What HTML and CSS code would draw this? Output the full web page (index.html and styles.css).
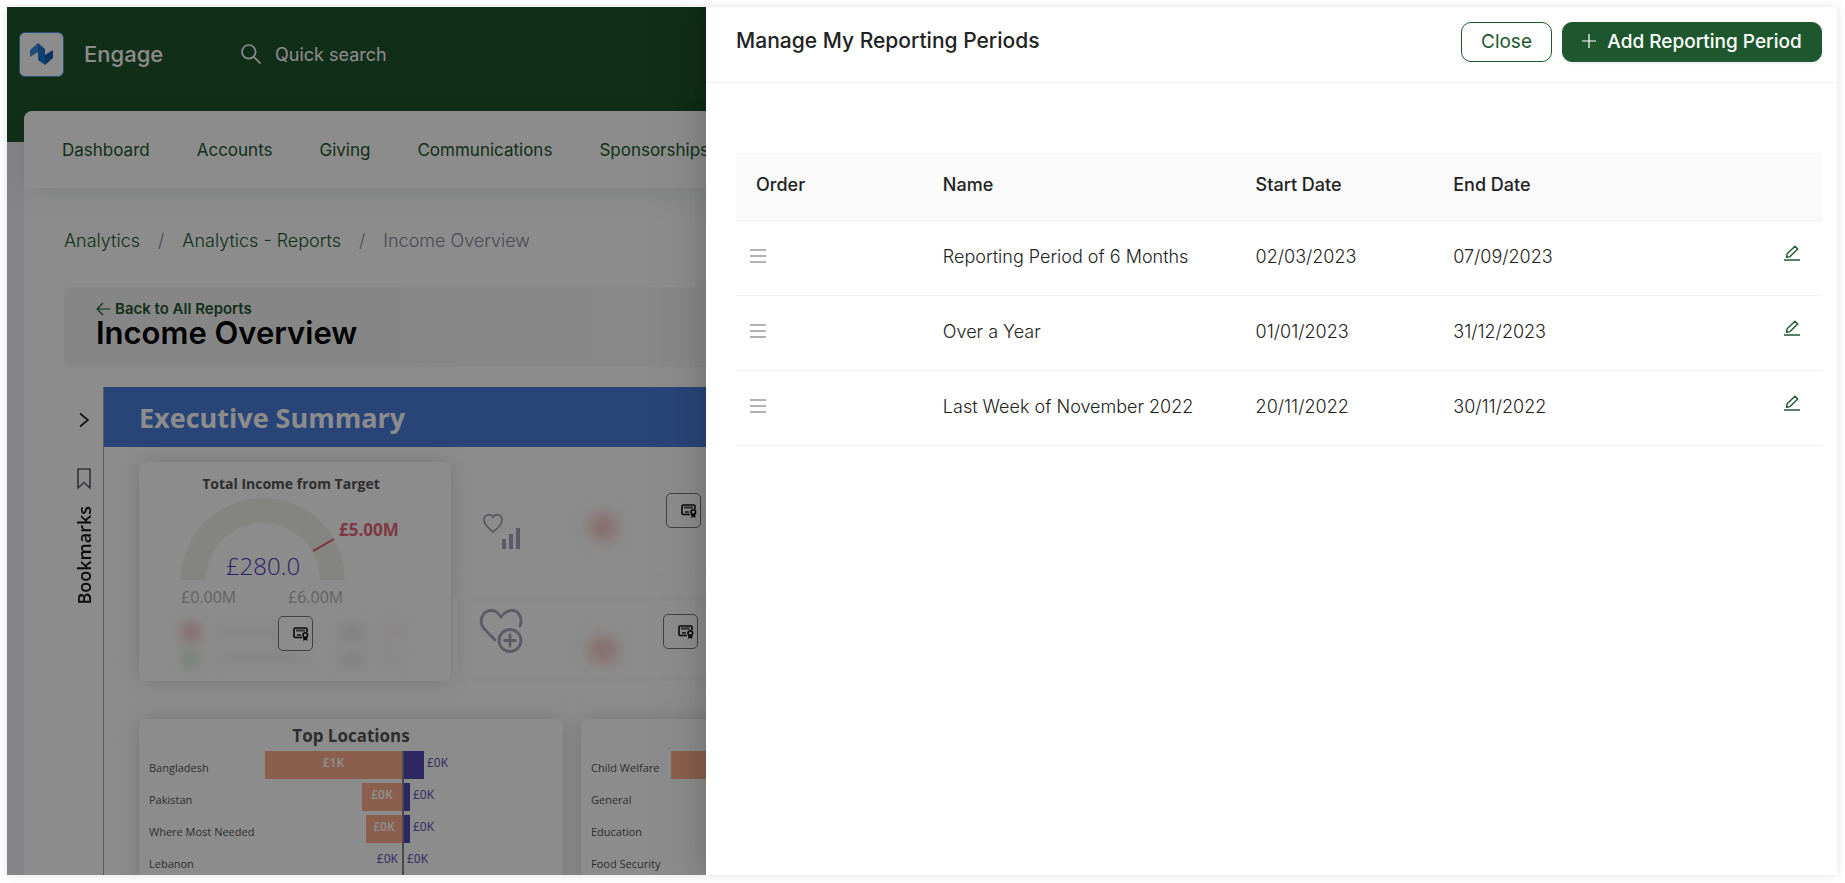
FILE: index.html
```html
<!DOCTYPE html>
<html lang="en">
<head>
<meta charset="utf-8">
<title>Engage - Income Overview</title>
<link rel="stylesheet" href="styles.css">
</head>
<body>
<svg class="defs" aria-hidden="true">
  <symbol id="cert" viewBox="0 0 16 16">
    <path d="M9 11.500H2.200Q1 11.500 1 10.300V3.200Q1 2 2.200 2H12.800Q14 2 14 3.200V6" fill="none" stroke="#111" stroke-width="1.600"/>
    <path d="M3 4.500H12M4 9H8" stroke="#555" stroke-width="1.800"/>
    <circle cx="12.300" cy="9" r="2.300" fill="#fff" stroke="#111" stroke-width="1.600"/>
    <path d="M10.300 11V15L12.300 13.700L14.300 15V11Z" fill="#111"/>
  </symbol>
  <symbol id="menu" viewBox="0 0 16 16">
    <path d="M0 2H16M0 8H16M0 14H16" stroke="#999" stroke-width="1.400"/>
  </symbol>
  <symbol id="edit" viewBox="0 0 16 16">
    <path d="M2.500 12.300L3.100 8.800L11 1.300L13.700 4L6 11.600Z" fill="none" stroke="#1e572e" stroke-width="1.400" stroke-linejoin="round"/>
    <path d="M0 15H16" stroke="#1e572e" stroke-width="1.500"/>
  </symbol>
</svg>
<div class="window">
  <div class="app">
    <header class="topbar">
      <div class="logo">
        <svg viewBox="0 0 24 24" width="24" height="24">
          <path d="M0 8L8 1V10L0 15Z" fill="#3b8fdc"/>
          <path d="M8 1L15 7V23L8 18Z" fill="#1c77cf"/>
          <path d="M15 13L23 8V16L15 23Z" fill="#1560b0"/>
        </svg>
      </div>
      <span class="brand">Engage</span>
      <label class="search">
        <svg viewBox="0 0 20 20" width="20" height="20" fill="none" stroke="#fff" stroke-width="1.700"><circle cx="7.800" cy="7.800" r="6.800"/><path d="M12.800 12.800L19.500 19.500"/></svg>
        <input type="text" placeholder="Quick search" aria-label="Quick search">
      </label>
    </header>
    <div class="page">
      <nav class="nav">
        <a href="#">Dashboard</a><a href="#">Accounts</a><a href="#">Giving</a><a href="#">Communications</a><a href="#">Sponsorships</a>
      </nav>
      <div class="crumbs">
        <a href="#">Analytics</a><span class="sep">/</span><a href="#">Analytics - Reports</a><span class="sep">/</span><span class="current">Income Overview</span>
      </div>
      <div class="heading">
        <a class="back" href="#"><svg viewBox="0 0 14 14" width="14" height="14" fill="none" stroke="#1e572e" stroke-width="1.200"><path d="M14 7H1M7 1L1 7L7 13"/></svg>Back to All Reports</a>
        <h1>Income Overview</h1>
      </div>
      <div class="report">
        <aside class="rail">
          <button class="expand" aria-label="Expand"><svg viewBox="0 0 10 16" width="10" height="16" fill="none" stroke="#222" stroke-width="1.700"><path d="M1 1.500L9 8L1 14.500"/></svg></button>
          <svg class="bookmark" viewBox="0 0 14 22" width="14" height="22" fill="none" stroke="#605e70" stroke-width="1.600"><path d="M1 1H13V20L7 14.500L1 20Z"/></svg>
          <span class="rail-text">Bookmarks</span>
        </aside>
        <div class="canvas">
          <h2 class="banner">Executive Summary</h2>
          <div class="row-top">
            <section class="card gauge">
              <h3>Total Income from Target</h3>
              <svg class="dial" viewBox="0 0 312 115" width="312" height="115">
                <path d="M42 80A82 82 0 0 1 206 80H181A57 57 0 0 0 67 80Z" fill="#f1f0ec"/>
                <path d="M174 51L195 39" stroke="#e8566a" stroke-width="2"/>
                <text x="124" y="75" class="t-value">£280.0</text>
                <text x="200" y="36" class="t-target">£5.00M</text>
                <text x="42" y="103" class="t-scale">£0.00M</text>
                <text x="149" y="103" class="t-scale">£6.00M</text>
              </svg>
              <div class="legend">
                <svg class="haze" viewBox="0 0 312 80" width="312" height="80">
                  <defs><filter id="soft" x="-50%" y="-80%" width="200%" height="260%"><feGaussianBlur stdDeviation="7"/></filter></defs>
                  <g filter="url(#soft)">
                    <circle cx="52" cy="25" r="9" fill="#f3b0b0"/><circle cx="52" cy="52" r="9" fill="#cfe4cf"/>
                    <rect x="77" y="21" width="96" height="8" fill="#eaeaea"/><rect x="77" y="48" width="90" height="8" fill="#eaeaea"/>
                    <rect x="200" y="18" width="26" height="14" fill="#e6e6e6"/><rect x="200" y="45" width="26" height="14" fill="#e6e6e6"/>
                    <circle cx="255" cy="24" r="9" fill="#f8ecec"/><circle cx="255" cy="52" r="9" fill="#eff4ef"/>
                  </g>
                </svg>
                <button class="badge" aria-label="Licence"><svg width="16" height="16"><use href="#cert"/></svg></button>
              </div>
            </section>
            <section class="kpis">
              <div class="kpi">
                <svg class="kpi-icon" viewBox="0 0 44 44" width="44" height="44">
                  <path d="M14 23C9 19 5 15 5 11C5 5 12 4.500 14 8C16 4.500 23 5 23 11C23 15 18 20 14 23Z" fill="none" stroke="#a9a5bd" stroke-width="1.800"/>
                  <path d="M25 40V30M32 40V25M39 40V19" stroke="#a9a5bd" stroke-width="4"/>
                </svg>
                <span class="blob"></span>
                <button class="badge" aria-label="Licence"><svg width="16" height="16"><use href="#cert"/></svg></button>
              </div>
              <div class="kpi kpi-low">
                <svg class="kpi-icon" viewBox="0 0 44 44" width="44" height="44" fill="none" stroke="#a9a5bd" stroke-width="2.800" stroke-linecap="round">
                  <path d="M16 31L4.500 19C-1 12 4 1.500 12 1.500C17 1.500 19 4 22 8C25 4 28 1.500 33 1.500C40 1.500 44 10 41 17"/>
                  <circle cx="31" cy="31.500" r="11"/><path d="M31 26V37M25.500 31.500H36.500"/>
                </svg>
                <span class="blob"></span>
                <button class="badge" aria-label="Licence"><svg width="16" height="16"><use href="#cert"/></svg></button>
              </div>
            </section>
          </div>
          <div class="row-bottom">
            <section class="card chart">
              <h3>Top Locations</h3>
              <div class="bars">
                <span class="label">Bangladesh</span><div class="neg"><b style="width:137px">£1K</b></div><div class="pos"><i style="width:20px"></i>£0K</div>
                <span class="label">Pakistan</span><div class="neg"><b style="width:40px">£0K</b></div><div class="pos"><i style="width:6px"></i>£0K</div>
                <span class="label">Where Most Needed</span><div class="neg"><b style="width:36px">£0K</b></div><div class="pos"><i style="width:6px"></i>£0K</div>
                <span class="label">Lebanon</span><div class="neg">£0K</div><div class="pos"><i style="width:0"></i>£0K</div>
              </div>
            </section>
            <section class="card chart">
              <div class="bars bars-next">
                <span class="label">Child Welfare</span><div class="fill"></div>
                <span class="label">General</span><div></div>
                <span class="label">Education</span><div></div>
                <span class="label">Food Security</span><div></div>
              </div>
            </section>
          </div>
        </div>
      </div>
    </div>
  </div>
  <div class="mask"></div>
  <aside class="drawer" role="dialog" aria-label="Manage My Reporting Periods">
    <div class="drawer-head">
      <h2>Manage My Reporting Periods</h2>
      <div class="actions">
        <button class="btn">Close</button>
        <button class="btn primary"><svg viewBox="0 0 14 14" width="14" height="14" stroke="#fff" stroke-width="1.200"><path d="M7 0V14M0 7H14"/></svg>Add Reporting Period</button>
      </div>
    </div>
    <div class="drawer-body">
      <table>
        <colgroup><col class="c-order"><col class="c-name"><col class="c-date"><col class="c-date"><col></colgroup>
        <thead><tr><th>Order</th><th>Name</th><th>Start Date</th><th>End Date</th><th></th></tr></thead>
        <tbody>
          <tr><td class="grip"><svg width="16" height="16"><use href="#menu"/></svg></td><td>Reporting Period of 6 Months</td><td>02/03/2023</td><td>07/09/2023</td><td class="tools"><button aria-label="Edit"><svg width="16" height="16"><use href="#edit"/></svg></button></td></tr>
          <tr><td class="grip"><svg width="16" height="16"><use href="#menu"/></svg></td><td>Over a Year</td><td>01/01/2023</td><td>31/12/2023</td><td class="tools"><button aria-label="Edit"><svg width="16" height="16"><use href="#edit"/></svg></button></td></tr>
          <tr><td class="grip"><svg width="16" height="16"><use href="#menu"/></svg></td><td>Last Week of November 2022</td><td>20/11/2022</td><td>30/11/2022</td><td class="tools"><button aria-label="Edit"><svg width="16" height="16"><use href="#edit"/></svg></button></td></tr>
        </tbody>
      </table>
    </div>
  </aside>
</div>
</body>
</html>
```
FILE: styles.css
```css
* { box-sizing: border-box; }
body {
  margin: 0;
  padding: 7px 8px 8px 7px;
  background: #fff;
  color: #222;
  font-family: Inter, "Open Sans", sans-serif;
  font-size: 18px;
  overflow: hidden;
}
button, input { font: inherit; color: inherit; }
button { padding: 0; border: 0; background: none; cursor: pointer; }
a { color: #1e572e; text-decoration: none; }
h1, h2, h3 { margin: 0; }
svg { display: block; flex: none; }
.defs { position: absolute; width: 0; height: 0; }

.window {
  position: relative;
  height: calc(100vh - 15px);
  box-shadow: 0 0 10px rgba(0, 0, 0, .12);
}
.app {
  height: 100%;
  overflow: hidden;
  background: linear-gradient(#1f552e 135px, #f1f2f8 135px);
}
.mask { position: absolute; inset: 0; background: rgba(0, 0, 0, .45); }

/* Top bar */
.topbar {
  display: flex;
  align-items: center;
  height: 104px;
  padding: 0 12px 10px;
  color: #fff;
}
.logo {
  display: grid;
  place-items: center;
  width: 45px;
  height: 45px;
  border: 1px solid #3f92dc;
  border-radius: 6px;
  background: #fff;
}
.brand { width: 157px; margin-left: 20px; font-size: 22px; font-weight: 500; }
.search { display: flex; align-items: center; gap: 14px; }
.search input { width: 200px; padding: 0; border: 0; background: none; font-size: 18px; font-weight: 400; }
.search input::placeholder { color: #fff; opacity: 1; }

/* Page */
.page { margin-left: 17px; background: #fff; border-radius: 8px 0 0 0; }
.nav {
  display: flex;
  gap: 47px;
  height: 77px;
  padding: 0 38px;
  align-items: center;
  border-radius: 8px;
  box-shadow: 0 4px 30px rgba(20, 40, 30, .1);
  font-size: 17px;
}
.crumbs {
  display: flex;
  gap: 18px;
  height: 99px;
  padding: 0 40px;
  line-height: 106px;
  font-size: 18px;
  font-weight: 300;
}
.sep, .current { color: #8a879e; }
.heading {
  height: 80px;
  margin: 0 40px;
  padding: 12px 32px;
  border-radius: 8px;
  background: linear-gradient(90deg, #f4f4f4, #fcfcfc);
}
.back {
  display: flex;
  align-items: center;
  gap: 5px;
  height: 20px;
  font-size: 15px;
  line-height: 18px;
  font-weight: 600;
}
h1 { color: #000; font-size: 31px; line-height: 28px; font-weight: 600; }

/* Report */
.report {
  display: grid;
  grid-template-columns: 39px 1fr;
  margin: 20px 40px 0;
  font-family: "Open Sans", "Noto Sans", sans-serif;
}
.rail { display: flex; flex-direction: column; align-items: center; padding-top: 25px; }
.bookmark { margin-top: 40px; }
.rail-text {
  margin-top: 16px;
  writing-mode: vertical-rl;
  transform: rotate(180deg);
  color: #111;
  font-size: 18px;
  line-height: 20px;
  font-weight: 600;
}
.canvas { border-left: 1px solid #aaa; }
.banner {
  height: 60px;
  padding-left: 35px;
  background: #4b7edb;
  color: #fff;
  font-size: 27px;
  line-height: 62px;
  font-weight: 700;
}
.row-top { display: grid; grid-template-columns: 312px 1fr; gap: 2px; padding: 15px 35px 38px; }
.row-bottom { display: grid; grid-template-columns: 424px 424px; gap: 18px; padding-left: 35px; }
.card {
  border-radius: 8px;
  background: #fff;
  box-shadow: 0 0 22px rgba(0, 0, 0, .16);
}
.card h3 { text-align: center; color: #555; font-weight: 700; }
.gauge { height: 219px; }
.gauge h3 { height: 38px; padding-right: 8px; font-size: 14px; line-height: 44px; }
.dial { overflow: visible; }
.t-value { fill: #5038b8; font: 300 24px "Open Sans", sans-serif; text-anchor: middle; }
.t-target { fill: #e8667a; font: 700 17px "Open Sans", sans-serif; }
.t-scale { fill: #b5b5b5; font: 400 16px "Open Sans", sans-serif; }
.legend { position: relative; }
.haze { margin-top: -8px; }
.badge {
  display: flex;
  align-items: center;
  justify-content: flex-end;
  width: 35px;
  height: 35px;
  padding-right: 3px;
  border: 1px solid #777;
  border-radius: 5px;
  background: #fff;
}
.legend .badge { position: absolute; left: 139px; top: 9px; }
.kpi { display: flex; align-items: center; height: 113px; padding-left: 26px; border-bottom: 1px solid #f9f9f9; }
.kpi-icon { margin-top: 26px; }
.blob { width: 28px; height: 28px; margin: 18px 0 0 66px; border-radius: 50%; background: #f6c4c0; filter: blur(8px); }
.kpi .badge { margin: -15px 0 0 49px; }
.kpi-low { height: 84px; margin-top: 22px; padding-left: 22px; border: 4px solid #fafafa; }
.kpi-low .badge { margin: -15px 0 0 46px; }
.kpi-low .kpi-icon { margin: -16px 0 0; }
.kpi-low .blob { margin-top: 22px; }

.chart { height: 190px; padding: 0 10px; }
.chart h3 { height: 32px; font-size: 17px; line-height: 34px; }
.bars {
  display: grid;
  grid-template-columns: 116px 137px 1fr;
  grid-auto-rows: 32px;
  color: #6256b8;
  font-family: "Noto Sans", "Open Sans", sans-serif;
  font-size: 12px;
  line-height: 24px;
}
.bars-next { grid-template-columns: 80px 1fr; padding-top: 32px; }
.label { padding-top: 5px; color: #555; white-space: nowrap; font-family: "Open Sans", sans-serif; font-size: 11px; }
.neg { text-align: right; padding-right: 4px; }
.neg b { float: right; height: 28px; margin-right: -4px; background: #fcae8c; color: #fff; font-weight: 600; text-align: center; }
.pos { display: flex; gap: 3px; border-left: 2px solid #888; }
.pos i { height: 28px; background: #5145b4; }
.fill { height: 28px; background: #fcae8c; }

/* Drawer */
.drawer {
  position: absolute;
  inset: 0 0 0 auto;
  width: 61.8%;
  background: #fff;
  box-shadow: -6px 0 16px rgba(0, 0, 0, .08), -9px 0 28px rgba(0, 0, 0, .05), -12px 0 48px 16px rgba(0, 0, 0, .03);
  clip-path: inset(0 0 0 -80px);
}
.drawer-head {
  display: flex;
  justify-content: space-between;
  height: 76px;
  padding: 15px 15px 0 30px;
  border-bottom: 1px solid #f0f0f0;
}
.drawer-head h2 { font-size: 21px; line-height: 38px; font-weight: 500; }
.actions { display: flex; gap: 10px; }
.btn {
  display: flex;
  align-items: center;
  justify-content: center;
  gap: 11px;
  height: 40px;
  min-width: 91px;
  padding-bottom: 2px;
  border: 1px solid #1e572e;
  border-radius: 10px;
  color: #1e572e;
  font-size: 19px;
}
.primary { min-width: 260px; background: #1e572e; color: #fff; font-weight: 500; box-shadow: 0 2px 2px rgba(0, 0, 0, .06); }
.drawer-body { padding: 70px 15px 0 30px; }
table { width: 100%; table-layout: fixed; border-collapse: collapse; }
.c-order { width: 17.2%; }
.c-name { width: 28.8%; }
.c-date { width: 18.2%; }
th, td { padding: 0 20px 3px; border-bottom: 1px solid #f0f0f0; text-align: left; }
th { height: 67px; background: #fafafa; font-weight: 500; }
td { height: 75px; font-weight: 300; }
.grip { padding: 0 14px 4px; }
.tools { padding: 0 22px 10px; }
.tools button { display: block; margin-left: auto; }
```
